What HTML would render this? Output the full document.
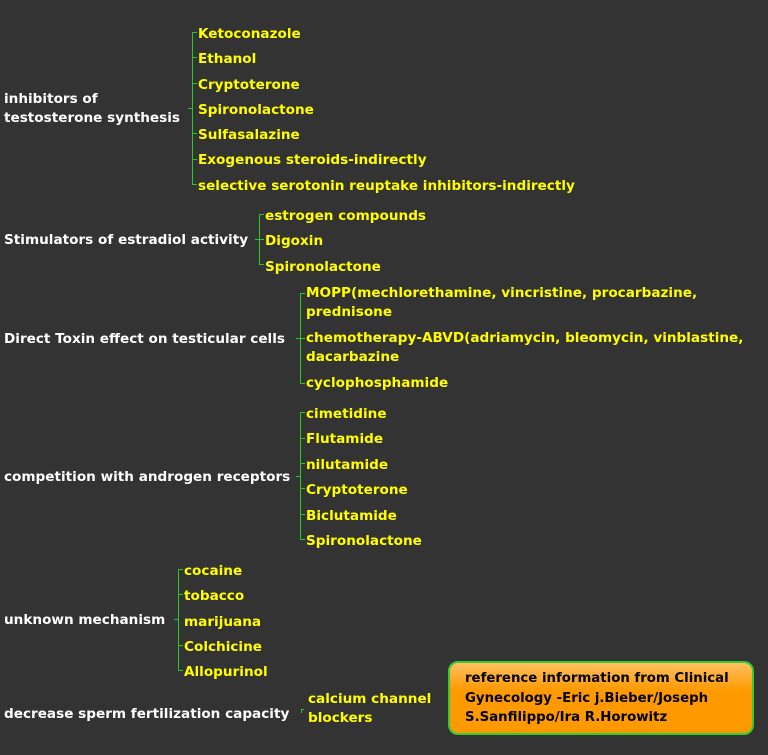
<!DOCTYPE html>
<html><head><style>
body{margin:0;width:768px;height:755px;background:#333;overflow:hidden;position:relative;font-family:"DejaVu Sans","Liberation Sans",sans-serif;font-weight:bold}
.t{position:absolute;line-height:19px;white-space:nowrap}
.w{color:#fff;font-size:13.6px}
.y{color:#ff0;font-size:13.6px}
.b{position:absolute;border-left:1px solid #2c2}
.k{position:absolute;height:1px;background:#2c2}
.box{position:absolute;left:448px;top:661px;width:302px;height:70px;border:2px solid #3c3;border-radius:10px;background:linear-gradient(#ffc060,#ff9900 40%,#ff9900);}
.box div{position:absolute;left:15px;font-size:13.3px;color:#000;line-height:19.5px;top:6px;white-space:nowrap}
</style></head><body>
<div class="t w" style="left:4px;top:90px">inhibitors of<br>testosterone synthesis</div>
<div class="b" style="left:192px;top:32px;height:152px"></div>
<div class="k" style="left:188px;top:108px;width:4px"></div>
<div class="t y" style="left:198px;top:22px;line-height:25.3px">Ketoconazole<br>Ethanol<br>Cryptoterone<br>Spironolactone<br>Sulfasalazine<br>Exogenous steroids-indirectly<br>selective serotonin reuptake inhibitors-indirectly</div>
<div class="k" style="left:192px;top:32px;width:5px"></div><div class="k" style="left:192px;top:57px;width:5px"></div><div class="k" style="left:192px;top:83px;width:5px"></div><div class="k" style="left:192px;top:133px;width:5px"></div><div class="k" style="left:192px;top:159px;width:5px"></div><div class="k" style="left:192px;top:184px;width:5px"></div>

<div class="t w" style="left:4px;top:231px">Stimulators of estradiol activity</div>
<div class="b" style="left:259px;top:214px;height:50px"></div>
<div class="k" style="left:255px;top:239px;width:9px"></div>
<div class="k" style="left:259px;top:214px;width:5px"></div><div class="k" style="left:259px;top:264px;width:5px"></div>
<div class="t y" style="left:265px;top:204px;line-height:25.3px">estrogen compounds<br>Digoxin<br>Spironolactone</div>

<div class="t w" style="left:4px;top:330px">Direct Toxin effect on testicular cells</div>
<div class="b" style="left:300px;top:293px;height:90px"></div>
<div class="k" style="left:296px;top:338px;width:4px"></div>
<div class="k" style="left:300px;top:293px;width:5px"></div><div class="k" style="left:300px;top:338px;width:5px"></div><div class="k" style="left:300px;top:383px;width:5px"></div>
<div class="t y" style="left:306px;top:284px">MOPP(mechlorethamine, vincristine, procarbazine,<br>prednisone</div>
<div class="t y" style="left:306px;top:329px">chemotherapy-ABVD(adriamycin, bleomycin, vinblastine,<br>dacarbazine</div>
<div class="t y" style="left:306px;top:374px">cyclophosphamide</div>

<div class="t w" style="left:4px;top:468px">competition with androgen receptors</div>
<div class="b" style="left:300px;top:412px;height:127px"></div>
<div class="k" style="left:296px;top:476px;width:4px"></div>
<div class="k" style="left:300px;top:412px;width:5px"></div><div class="k" style="left:300px;top:438px;width:5px"></div><div class="k" style="left:300px;top:463px;width:5px"></div><div class="k" style="left:300px;top:488px;width:5px"></div><div class="k" style="left:300px;top:514px;width:5px"></div><div class="k" style="left:300px;top:539px;width:5px"></div>
<div class="t y" style="left:306px;top:402px;line-height:25.4px">cimetidine<br>Flutamide<br>nilutamide<br>Cryptoterone<br>Biclutamide<br>Spironolactone</div>

<div class="t w" style="left:4px;top:611px">unknown mechanism</div>
<div class="b" style="left:178px;top:569px;height:101px"></div>
<div class="k" style="left:174px;top:619px;width:4px"></div>
<div class="k" style="left:178px;top:569px;width:5px"></div><div class="k" style="left:178px;top:594px;width:5px"></div><div class="k" style="left:178px;top:645px;width:5px"></div><div class="k" style="left:178px;top:670px;width:5px"></div>
<div class="t y" style="left:184px;top:559px;line-height:25.3px">cocaine<br>tobacco<br>marijuana<br>Colchicine<br>Allopurinol</div>

<div class="t w" style="left:4px;top:705px">decrease sperm fertilization capacity</div>
<div class="b" style="left:301px;top:709px;height:4px"></div>
<div class="k" style="left:301px;top:709px;width:3px"></div>
<div class="t y" style="left:308px;top:690px">calcium channel<br>blockers</div>

<div class="box"><div>reference information from Clinical<br>Gynecology -Eric j.Bieber/Joseph<br>S.Sanfilippo/Ira R.Horowitz</div></div>
</body></html>
